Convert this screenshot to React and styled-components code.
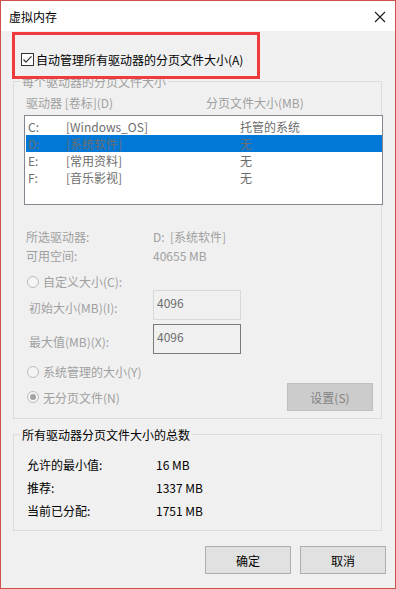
import React from "react";
import styled, { createGlobalStyle } from "styled-components";

const GlobalStyle = createGlobalStyle`
    html, body {
        margin: 0;
        padding: 0;
        background: #ffffff;
    }
    * {
        box-sizing: border-box;
    }
`;

const FONT = `"Microsoft YaHei", "Noto Sans CJK SC", "Noto Sans", sans-serif`;

const Window = styled.div`
    display: flex;
    flex-direction: column;
    width: 396px;
    height: 589px;
    border: 1px solid #d0504b;
    font-family: ${FONT};
    font-size: 12px;
    line-height: 17px;
    color: #000;
`;

const TitleBar = styled.div`
    display: flex;
    align-items: center;
    justify-content: space-between;
    height: 30px;
    padding: 0 9px 0 8px;
    background: #ffffff;
`;

const Title = styled.span`
    font-size: 12px;
    color: #000;
`;

const Close = styled.div`
    display: flex;
    width: 12px;
    height: 12px;
    margin-top: 1px;
`;

const Body = styled.div`
    display: flex;
    flex-direction: column;
    flex: 1;
    background: #f0f0f0;
`;

const Highlight = styled.div`
    position: relative;
    z-index: 1;
    width: 248px;
    height: 47px;
    margin: 1px 0 -6px 11px;
    padding: 16px 0 0 6px;
    border: 3px solid #ef3b3b;
`;

const CheckRow = styled.label`
    display: flex;
    align-items: center;
    gap: 2px;
    height: 17px;
`;

const Group = styled.fieldset`
    width: 369px;
    margin: ${(props) => props.$top || 0}px 0 0 12px;
    padding: 0;
    min-width: 0;
    border: 1px solid #dcdcdc;
`;

const Legend = styled.legend`
    margin-left: 6px;
    padding: 0 2px;
    line-height: 17px;
    color: ${(props) => (props.$disabled ? "#a0a0a0" : "#000")};
`;

const GroupInner = styled.div`
    display: flex;
    flex-direction: column;
    padding: ${(props) => props.$pad};
`;

const Header = styled.div`
    display: flex;
    padding: 4px 0 0 12px;
    color: #a0a0a0;
`;

const HeaderCol = styled.span`
    width: ${(props) => props.$w || "auto"};
`;

const List = styled.div`
    width: 359px;
    height: 90px;
    margin: 4px 0 0 10px;
    padding: 2px 0 0 1px;
    background: #ffffff;
    border: 1px solid #828790;
`;

const ListRow = styled.div`
    display: flex;
    height: 17px;
    padding-left: 2px;
    color: #6d6d6d;
    background: ${(props) => (props.$selected ? "#0078d7" : "transparent")};
`;

const Cell = styled.span`
    width: ${(props) => props.$w || "auto"};
    white-space: nowrap;
`;

const InfoBlock = styled.div`
    display: flex;
    flex-direction: column;
    margin-top: 22px;
    padding-left: 12px;
    color: #a0a0a0;
`;

const InfoRow = styled.div`
    display: flex;
    line-height: ${(props) => props.$lh || 19}px;
    color: ${(props) => props.$color || "inherit"};
`;

const InfoLabel = styled.span`
    width: ${(props) => props.$w}px;
`;

const RadioRow = styled.label`
    display: flex;
    align-items: center;
    gap: 4px;
    height: 17px;
    margin-top: ${(props) => props.$top || 0}px;
    padding-left: 13px;
    color: #a0a0a0;
`;

const RadioCircle = styled.span`
    display: flex;
    align-items: center;
    justify-content: center;
    width: 12px;
    height: 12px;
    border: 1px solid #bcbcbc;
    border-radius: 50%;
    background: #f4f4f4;
`;

const RadioDot = styled.span`
    width: 6px;
    height: 6px;
    border-radius: 50%;
    background: #a3a3a3;
`;

const SizeRow = styled.div`
    display: flex;
    margin-top: ${(props) => props.$top || 0}px;
    padding-left: 15px;
    color: #a0a0a0;
`;

const SizeLabel = styled.span`
    width: 124px;
    padding-top: 9px;
`;

const SizeInput = styled.div`
    width: 88px;
    height: 30px;
    padding: 3px 0 0 3px;
    color: #6d6d6d;
    border: 1px solid ${(props) => (props.$focus ? "#7a7a7a" : "#d9d9d9")};
    background: #f0f0f0;
`;

const LastRow = styled.div`
    display: flex;
    align-items: center;
    justify-content: space-between;
    margin-top: 3px;
    padding-right: 8px;
`;

const Button = styled.div`
    display: flex;
    align-items: center;
    justify-content: center;
    width: 86px;
    height: 28px;
    color: ${(props) => (props.$disabled ? "#838383" : "#000")};
    background: ${(props) => (props.$disabled ? "#cccccc" : "#e1e1e1")};
    border: 1px solid ${(props) => (props.$disabled ? "#bfbfbf" : "#adadad")};
`;

const Footer = styled.div`
    display: flex;
    justify-content: flex-end;
    gap: 9px;
    margin-top: 15px;
    padding-right: 9px;
`;

const CloseIcon = () => (
    <svg width="12" height="12" viewBox="0 0 12 12">
        <path d="M1 1 L11 11 M11 1 L1 11" stroke="#1a1a1a" strokeWidth="1.1" fill="none" />
    </svg>
);

const CheckIcon = () => (
    <svg width="13" height="13" viewBox="0 0 13 13">
        <rect x="0.5" y="0.5" width="12" height="12" fill="#ffffff" stroke="#333333" />
        <path d="M2.5 6.5 L5 9.2 L10.5 3.3" stroke="#333333" strokeWidth="1.2" fill="none" />
    </svg>
);

const Radio = ({ checked }) => <RadioCircle>{checked && <RadioDot />}</RadioCircle>;

const drives = [
    { drive: "C:", label: "[Windows_OS]", size: "托管的系统" },
    { drive: "D:", label: "[系统软件]", size: "无", selected: true },
    { drive: "E:", label: "[常用资料]", size: "无" },
    { drive: "F:", label: "[音乐影视]", size: "无" },
];

const totals = [
    ["允许的最小值:", "16 MB"],
    ["推荐:", "1337 MB"],
    ["当前已分配:", "1751 MB"],
];

export default function App() {
    return (
        <>
            <GlobalStyle />
            <Window>
                <TitleBar>
                    <Title>虚拟内存</Title>
                    <Close>
                        <CloseIcon />
                    </Close>
                </TitleBar>
                <Body>
                    <Highlight>
                        <CheckRow>
                            <CheckIcon />
                            <span>自动管理所有驱动器的分页文件大小(A)</span>
                        </CheckRow>
                    </Highlight>

                    <Group>
                        <Legend $disabled>每个驱动器的分页文件大小</Legend>
                        <GroupInner $pad="0 0 7px 0">
                            <Header>
                                <HeaderCol $w="180px">驱动器 [卷标](D)</HeaderCol>
                                <HeaderCol>分页文件大小(MB)</HeaderCol>
                            </Header>
                            <List>
                                {drives.map((d, id) => (
                                    <ListRow key={id} $selected={d.selected}>
                                        <Cell $w="38px">{d.drive}</Cell>
                                        <Cell $w="174px">{d.label}</Cell>
                                        <Cell>{d.size}</Cell>
                                    </ListRow>
                                ))}
                            </List>
                            <InfoBlock>
                                <InfoRow>
                                    <InfoLabel $w={127}>所选驱动器:</InfoLabel>
                                    <span>D:&nbsp; [系统软件]</span>
                                </InfoRow>
                                <InfoRow>
                                    <InfoLabel $w={127}>可用空间:</InfoLabel>
                                    <span>40655 MB</span>
                                </InfoRow>
                            </InfoBlock>
                            <RadioRow $top={8}>
                                <Radio />
                                <span>自定义大小(C):</span>
                            </RadioRow>
                            <SizeRow>
                                <SizeLabel>初始大小(MB)(I):</SizeLabel>
                                <SizeInput>4096</SizeInput>
                            </SizeRow>
                            <SizeRow $top={4}>
                                <SizeLabel>最大值(MB)(X):</SizeLabel>
                                <SizeInput $focus>4096</SizeInput>
                            </SizeRow>
                            <RadioRow $top={9}>
                                <Radio />
                                <span>系统管理的大小(Y)</span>
                            </RadioRow>
                            <LastRow>
                                <RadioRow>
                                    <Radio checked />
                                    <span>无分页文件(N)</span>
                                </RadioRow>
                                <Button $disabled>设置(S)</Button>
                            </LastRow>
                        </GroupInner>
                    </Group>

                    <Group $top={7}>
                        <Legend>所有驱动器分页文件大小的总数</Legend>
                        <GroupInner $pad="10px 0 8px 13px">
                            {totals.map(([label, value], id) => (
                                <InfoRow key={id} $lh={23} $color="#000">
                                    <InfoLabel $w={129}>{label}</InfoLabel>
                                    <span>{value}</span>
                                </InfoRow>
                            ))}
                        </GroupInner>
                    </Group>

                    <Footer>
                        <Button>确定</Button>
                        <Button>取消</Button>
                    </Footer>
                </Body>
            </Window>
        </>
    );
}
